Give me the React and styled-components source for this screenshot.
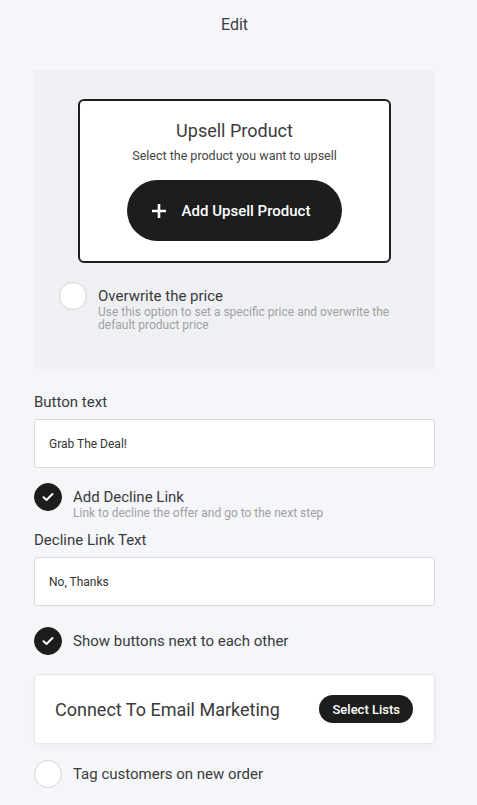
import React from "react";
import styled, { createGlobalStyle } from "styled-components";

const Global = createGlobalStyle`
  body {
    margin: 0;
    background: #f5f6fa;
    font-family: Roboto, "Noto Sans", sans-serif;
    color: #3a3a3a;
  }
`;

const Page = styled.div`
  width: 477px;
  padding: 0 42px 0 34px;
  box-sizing: border-box;
`;

const Title = styled.div`
  height: 50px;
  padding-top: 15px;
  box-sizing: border-box;
  text-align: center;
  font-size: 16px;
  color: #3d3d45;
  margin-bottom: 20px;
`;

const Panel = styled.div`
  background: #eff0f4;
  padding: 29px 25px 30px;
  height: 299px;
  box-sizing: border-box;
`;

const ProductCard = styled.div`
  margin: 0 19px;
  background: #fff;
  border: 2px solid #1e1e1e;
  border-radius: 6px;
  height: 164px;
  box-sizing: border-box;
  display: flex;
  flex-direction: column;
  align-items: center;
  padding-top: 19px;
`;

const CardTitle = styled.div`
  font-size: 18px;
  color: #3d3d3d;
  line-height: 22px;
`;

const CardSub = styled.div`
  font-size: 12.5px;
  color: #444;
  margin-top: 6px;
  line-height: 16px;
`;

const BigButton = styled.button`
  margin-top: 16px;
  width: 215px;
  height: 61px;
  border: none;
  border-radius: 31px;
  background: #1d1d1d;
  color: #fff;
  font-family: inherit;
  font-size: 15px;
  font-weight: 500;
  display: flex;
  align-items: center;
  justify-content: center;
  gap: 15px;
  padding-right: 14px;
  cursor: pointer;
  svg { flex: none; }
`;

const Option = styled.div`
  display: flex;
  align-items: ${(p) => (p.$center ? "center" : "flex-start")};
  gap: 11px;
  margin-top: ${(p) => p.$mt || 0}px;
`;

const Circle = styled.div`
  width: 28px;
  height: 28px;
  flex: none;
  border-radius: 50%;
  box-sizing: border-box;
  background: ${(p) => (p.$on ? "#1d1d1d" : "#fff")};
  border: 1px solid ${(p) => (p.$on ? "#1d1d1d" : "#d3d3d3")};
  display: flex;
  align-items: center;
  justify-content: center;
`;

const OptText = styled.div`
  padding-top: ${(p) => p.$pt || 0}px;
`;

const OptLabel = styled.div`
  font-size: 15px;
  line-height: ${(p) => (p.$tall ? 20 : 18)}px;
  color: #3a3a3a;
`;

const OptHint = styled.div`
  font-size: 12px;
  line-height: 13px;
  color: #a0a0a0;
  max-width: 300px;
`;

const FieldLabel = styled.div`
  font-size: 15px;
  line-height: 18px;
  color: #3a3a3a;
  margin-top: ${(p) => p.$mt || 0}px;
`;

const Input = styled.div`
  margin-top: 8px;
  height: 49px;
  background: #fff;
  border: 1px solid #dadada;
  border-radius: 3px;
  box-sizing: border-box;
  display: flex;
  align-items: center;
  padding-left: 14px;
  font-size: 12px;
  color: #333;
`;

const EmailCard = styled.div`
  margin-top: 19px;
  height: 70px;
  background: #fff;
  border: 1px solid #e6e6ea;
  border-radius: 4px;
  box-sizing: border-box;
  box-shadow: 0 2px 6px rgba(0, 0, 0, 0.04);
  display: flex;
  align-items: center;
  justify-content: space-between;
  padding: 0 21px 0 20px;
`;

const EmailTitle = styled.div`
  font-size: 18px;
  color: #3a3a3a;
`;

const SmallButton = styled.button`
  height: 28px;
  padding: 0 13px;
  border: none;
  border-radius: 14px;
  background: #1d1d1d;
  color: #fff;
  font-family: inherit;
  font-size: 13px;
  font-weight: 500;
  cursor: pointer;
`;

const Check = () => (
  <svg width="12" height="10" viewBox="0 0 12 10">
    <path d="M1.5 5.2 L4.5 8 L10.5 2" fill="none" stroke="#fff" strokeWidth="2" strokeLinecap="round" strokeLinejoin="round" />
  </svg>
);

const Plus = () => (
  <svg width="16" height="16" viewBox="0 0 16 16">
    <path d="M8 1 V15 M1 8 H15" stroke="#fff" strokeWidth="2.6" />
  </svg>
);

export default function App() {
  return (
    <>
      <Global />
      <Page>
        <Title>Edit</Title>
        <Panel>
          <ProductCard>
            <CardTitle>Upsell Product</CardTitle>
            <CardSub>Select the product you want to upsell</CardSub>
            <BigButton>
              <Plus />
              Add Upsell Product
            </BigButton>
          </ProductCard>
          <Option $mt={19}>
            <Circle />
            <OptText $pt={4}>
              <OptLabel $tall>Overwrite the price</OptLabel>
              <OptHint>Use this option to set a specific price and overwrite the default product price</OptHint>
            </OptText>
          </Option>
        </Panel>
        <FieldLabel $mt={24}>Button text</FieldLabel>
        <Input>Grab The Deal!</Input>
        <Option $mt={15}>
          <Circle $on>
            <Check />
          </Circle>
          <OptText $pt={4}>
            <OptLabel $tall>Add Decline Link</OptLabel>
            <OptHint>Link to decline the offer and go to the next step</OptHint>
          </OptText>
        </Option>
        <FieldLabel $mt={11}>Decline Link Text</FieldLabel>
        <Input>No, Thanks</Input>
        <Option $mt={21} $center>
          <Circle $on>
            <Check />
          </Circle>
          <OptLabel>Show buttons next to each other</OptLabel>
        </Option>
        <EmailCard>
          <EmailTitle>Connect To Email Marketing</EmailTitle>
          <SmallButton>Select Lists</SmallButton>
        </EmailCard>
        <Option $mt={16} $center>
          <Circle />
          <OptLabel>Tag customers on new order</OptLabel>
        </Option>
      </Page>
    </>
  );
}
